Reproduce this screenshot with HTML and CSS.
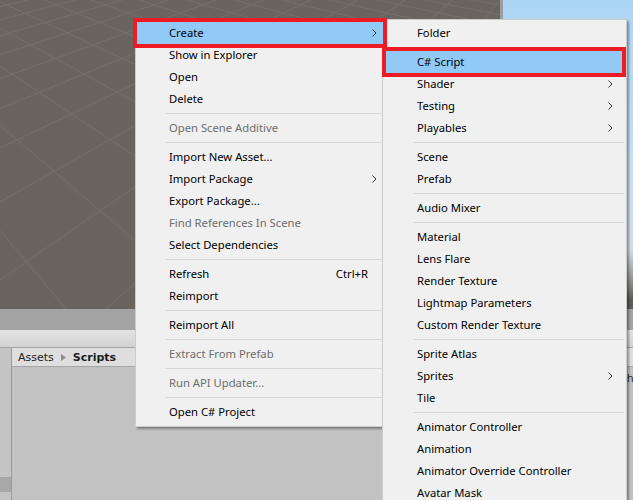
FILE: index.html
```html
<!DOCTYPE html>
<html>
<head>
<meta charset="utf-8">
<link rel="stylesheet" href="styles.css">
</head>
<body>
<div class="app">
  <div class="top">
    <div class="scene">
      <svg class="grid" width="500" height="309" viewBox="0 0 500 309">
        <g stroke="#75706b" stroke-width="1" fill="none">
          <line x1="615" y1="-145" x2="-1226" y2="309"/>
          <line x1="615" y1="-145" x2="-1078" y2="309"/>
          <line x1="615" y1="-145" x2="-930" y2="309"/>
          <line x1="615" y1="-145" x2="-782" y2="309"/>
          <line x1="615" y1="-145" x2="-634" y2="309"/>
          <line x1="615" y1="-145" x2="-486" y2="309"/>
          <line x1="615" y1="-145" x2="-338" y2="309"/>
          <line x1="615" y1="-145" x2="-190" y2="309"/>
          <line x1="615" y1="-145" x2="-42" y2="309"/>
          <line x1="615" y1="-145" x2="106" y2="309"/>
          <line x1="615" y1="-145" x2="254" y2="309"/>
          <line x1="615" y1="-145" x2="402" y2="309"/>
          <line x1="-316" y1="-145" x2="66" y2="309"/>
          <line x1="-316" y1="-145" x2="215" y2="309"/>
          <line x1="-316" y1="-145" x2="364" y2="309"/>
          <line x1="-316" y1="-145" x2="513" y2="309"/>
          <line x1="-316" y1="-145" x2="662" y2="309"/>
          <line x1="-316" y1="-145" x2="811" y2="309"/>
          <line x1="-316" y1="-145" x2="960" y2="309"/>
          <line x1="-316" y1="-145" x2="1109" y2="309"/>
          <line x1="-316" y1="-145" x2="1258" y2="309"/>
          <line x1="-316" y1="-145" x2="1407" y2="309"/>
          <line x1="-316" y1="-145" x2="1556" y2="309"/>
          <line x1="-316" y1="-145" x2="1705" y2="309"/>
          <line x1="-316" y1="-145" x2="1854" y2="309"/>
          <line x1="-316" y1="-145" x2="2003" y2="309"/>
          <line x1="-316" y1="-145" x2="2152" y2="309"/>
          <line x1="-316" y1="-145" x2="2301" y2="309"/>
        </g>
      </svg>
    </div>
    <div class="divider"></div>
    <div class="game"></div>
  </div>
  <div class="tabbar"></div>
  <div class="toolbar"></div>
  <div class="project">
    <div class="tree"><div class="tree-sel"></div></div>
    <div class="content">
      <div class="crumbs">
        <span>Assets</span>
        <svg class="crumb-sep" width="5" height="7" viewBox="0 0 5 7"><path d="M0 0 L5 3.5 L0 7 Z" fill="#8f8f8f"/></svg>
        <span class="crumb-current">Scripts</span>
      </div>
      <div class="files"><span class="empty">This</span></div>
    </div>
  </div>
</div>

<div class="menu main-menu">
  <div class="item active marked"><span>Create</span><svg class="arrow" width="5" height="8" viewBox="0 0 5 8"><path d="M0.5 0.5 L4 4 L0.5 7.5" stroke="#333" fill="none"/></svg></div>
  <div class="item"><span>Show in Explorer</span></div>
  <div class="item"><span>Open</span></div>
  <div class="item"><span>Delete</span></div>
  <div class="sep"></div>
  <div class="item disabled"><span>Open Scene Additive</span></div>
  <div class="sep"></div>
  <div class="item"><span>Import New Asset...</span></div>
  <div class="item"><span>Import Package</span><svg class="arrow" width="5" height="8" viewBox="0 0 5 8"><path d="M0.5 0.5 L4 4 L0.5 7.5" stroke="#333" fill="none"/></svg></div>
  <div class="item"><span>Export Package...</span></div>
  <div class="item disabled"><span>Find References In Scene</span></div>
  <div class="item"><span>Select Dependencies</span></div>
  <div class="sep"></div>
  <div class="item"><span>Refresh</span><span class="shortcut">Ctrl+R</span></div>
  <div class="item"><span>Reimport</span></div>
  <div class="sep"></div>
  <div class="item"><span>Reimport All</span></div>
  <div class="sep"></div>
  <div class="item disabled"><span>Extract From Prefab</span></div>
  <div class="sep"></div>
  <div class="item disabled"><span>Run API Updater...</span></div>
  <div class="sep"></div>
  <div class="item"><span>Open C# Project</span></div>
</div>

<div class="menu sub-menu">
  <div class="item"><span>Folder</span></div>
  <div class="sep"></div>
  <div class="item active marked"><span>C# Script</span></div>
  <div class="item"><span>Shader</span><svg class="arrow" width="5" height="8" viewBox="0 0 5 8"><path d="M0.5 0.5 L4 4 L0.5 7.5" stroke="#333" fill="none"/></svg></div>
  <div class="item"><span>Testing</span><svg class="arrow" width="5" height="8" viewBox="0 0 5 8"><path d="M0.5 0.5 L4 4 L0.5 7.5" stroke="#333" fill="none"/></svg></div>
  <div class="item"><span>Playables</span><svg class="arrow" width="5" height="8" viewBox="0 0 5 8"><path d="M0.5 0.5 L4 4 L0.5 7.5" stroke="#333" fill="none"/></svg></div>
  <div class="sep"></div>
  <div class="item"><span>Scene</span></div>
  <div class="item"><span>Prefab</span></div>
  <div class="sep"></div>
  <div class="item"><span>Audio Mixer</span></div>
  <div class="sep"></div>
  <div class="item"><span>Material</span></div>
  <div class="item"><span>Lens Flare</span></div>
  <div class="item"><span>Render Texture</span></div>
  <div class="item"><span>Lightmap Parameters</span></div>
  <div class="item"><span>Custom Render Texture</span></div>
  <div class="sep"></div>
  <div class="item"><span>Sprite Atlas</span></div>
  <div class="item"><span>Sprites</span><svg class="arrow" width="5" height="8" viewBox="0 0 5 8"><path d="M0.5 0.5 L4 4 L0.5 7.5" stroke="#333" fill="none"/></svg></div>
  <div class="item"><span>Tile</span></div>
  <div class="sep"></div>
  <div class="item"><span>Animator Controller</span></div>
  <div class="item"><span>Animation</span></div>
  <div class="item"><span>Animator Override Controller</span></div>
  <div class="item"><span>Avatar Mask</span></div>
</div>
</body>
</html>
```

FILE: styles.css
```css
html, body {
  margin: 0;
  padding: 0;
}
body {
  width: 633px;
  height: 500px;
  overflow: hidden;
  position: relative;
  font-family: "DejaVu Sans", sans-serif;
  background: #c2c2c2;
}
.app {
  display: flex;
  flex-direction: column;
  height: 500px;
}
.top {
  display: flex;
  height: 309px;
  flex-shrink: 0;
}
.scene {
  width: 500px;
  flex-shrink: 0;
  background: #6a645f;
  overflow: hidden;
}
.grid {
  display: block;
}
.divider {
  width: 3px;
  flex-shrink: 0;
  background: #9d9d9d;
}
.game {
  flex: 1;
  background: linear-gradient(180deg, #acd6f5 0px, #c3e1f7 160px, #cfdde7 250px, #8b8681 285px, #5f5a55 300px);
}
.tabbar {
  height: 21px;
  flex-shrink: 0;
  background: #a3a3a3;
}
.toolbar {
  height: 17px;
  flex-shrink: 0;
  background: linear-gradient(180deg, #e3e3e3, #d2d2d2);
  border-bottom: 1px solid #a4a4a4;
}
.project {
  flex: 1;
  display: flex;
  min-height: 0;
}
.tree {
  width: 11px;
  flex-shrink: 0;
  background: #c4c4c4;
  border-right: 1px solid #9a9a9a;
  padding-top: 129px;
}
.tree-sel {
  height: 15px;
  background: #a8a8a8;
}
.content {
  flex: 1;
  min-width: 0;
  overflow: hidden;
  background: #c2c2c2;
}
.crumbs {
  height: 18px;
  background: #dedede;
  border-bottom: 1px solid #a6a6a6;
  display: flex;
  align-items: center;
  padding-left: 6px;
  font-size: 11px;
  color: #1c1c1c;
}
.crumb-sep {
  margin: 0 7px;
}
.crumb-current {
  font-weight: bold;
}
.files {
  padding: 5px 0 0 608px;
  font-size: 11px;
  color: #2a2a2a;
  white-space: nowrap;
}

/* context menus */
.menu {
  position: absolute;
  background: #f0f0f0;
  border: 1px solid #cccccc;
  box-shadow: 2px 2px 2px rgba(0, 0, 0, 0.35);
  font-family: "Noto Sans", sans-serif;
  font-size: 11.25px;
  color: #000;
}
.main-menu {
  left: 135px;
  top: 18px;
  width: 246px;
  padding: 3px 1px;
}
.sub-menu {
  left: 382px;
  top: 19px;
  width: 236px;
  padding: 2px 4px 3px 3px;
}
.item {
  height: 22px;
  line-height: 22px;
  display: flex;
  align-items: center;
  white-space: nowrap;
}
.main-menu .item {
  padding: 0 6px 0 32px;
}
.sub-menu .item {
  padding: 0 9px 0 31px;
}
.item > span:first-child {
  flex: 1;
}
.item.disabled {
  color: #6d6d6d;
}
.item.active {
  background: #91c9f7;
}
.item.marked {
  position: relative;
  z-index: 1;
  outline: 4px solid #ed1c24;
}
.shortcut {
  padding-right: 9px;
}
.arrow {
  display: block;
}
.sep {
  height: 1px;
  background: #d7d7d7;
  margin: 3px 0 3px 28px;
}
.sub-menu .sep {
  margin: 3px -2px 3px 27px;
}
```
